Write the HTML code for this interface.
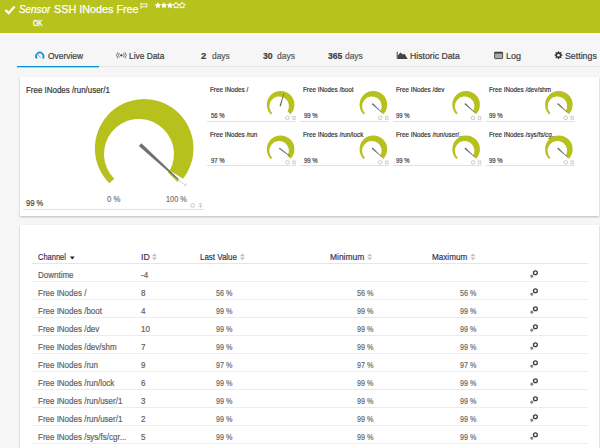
<!DOCTYPE html>
<html><head><meta charset="utf-8"><style>
html,body{margin:0;padding:0;}
body{width:600px;height:448px;overflow:hidden;position:relative;background:#f6f6f6;font-family:"Liberation Sans", sans-serif;}
.t{position:absolute;white-space:nowrap;font-family:"Liberation Sans", sans-serif;transform-origin:0 0;-webkit-text-stroke:0.2px currentColor;}
.panel{position:absolute;background:#fff;box-shadow:0 1px 2px rgba(0,0,0,0.25);}
svg{position:absolute;left:0;top:0;}
</style></head><body>
<div style="position:absolute;left:0px;top:0px;width:600px;height:33px;background:#b8c21c;"></div>
<div style="position:absolute;left:18px;top:66px;width:582px;height:1px;background:#e8e8e8;"></div>
<div style="position:absolute;left:17px;top:66px;width:82px;height:1px;background:#0a8fd6;"></div>
<div style="position:absolute;left:17px;top:67px;width:82px;height:1px;background:#a9d5ee;"></div>
<div class="panel" style="left:19.5px;top:77px;width:579px;height:139px"></div>
<div style="position:absolute;left:23px;top:209px;width:181px;height:1px;background:#e2e2e2;"></div>
<div style="position:absolute;left:207px;top:121px;width:89px;height:1px;background:#e2e2e2;"></div>
<div style="position:absolute;left:300px;top:121px;width:89px;height:1px;background:#e2e2e2;"></div>
<div style="position:absolute;left:393px;top:121px;width:89px;height:1px;background:#e2e2e2;"></div>
<div style="position:absolute;left:486px;top:121px;width:89px;height:1px;background:#e2e2e2;"></div>
<div style="position:absolute;left:207px;top:165px;width:89px;height:1px;background:#e2e2e2;"></div>
<div style="position:absolute;left:300px;top:165px;width:89px;height:1px;background:#e2e2e2;"></div>
<div style="position:absolute;left:393px;top:165px;width:89px;height:1px;background:#e2e2e2;"></div>
<div style="position:absolute;left:486px;top:165px;width:89px;height:1px;background:#e2e2e2;"></div>
<div class="panel" style="left:19.5px;top:225px;width:579px;height:240px"></div>
<div style="position:absolute;left:32px;top:263px;width:556px;height:1px;background:#e6e6e6;"></div>
<div style="position:absolute;left:32px;top:281px;width:556px;height:1px;background:#ececec;"></div>
<div style="position:absolute;left:32px;top:299px;width:556px;height:1px;background:#ececec;"></div>
<div style="position:absolute;left:32px;top:317px;width:556px;height:1px;background:#ececec;"></div>
<div style="position:absolute;left:32px;top:335px;width:556px;height:1px;background:#ececec;"></div>
<div style="position:absolute;left:32px;top:353px;width:556px;height:1px;background:#ececec;"></div>
<div style="position:absolute;left:32px;top:371px;width:556px;height:1px;background:#ececec;"></div>
<div style="position:absolute;left:32px;top:389px;width:556px;height:1px;background:#ececec;"></div>
<div style="position:absolute;left:32px;top:407px;width:556px;height:1px;background:#ececec;"></div>
<div style="position:absolute;left:32px;top:425px;width:556px;height:1px;background:#ececec;"></div>
<div style="position:absolute;left:32px;top:443px;width:556px;height:1px;background:#ececec;"></div>
<div class="t" style="left:19.06px;top:4px;font-size:10.5px;line-height:10.5px;color:#fff;font-weight:normal;font-style:italic;transform:scaleX(0.9390);-webkit-text-stroke:0.25px #fff">Sensor</div>
<div class="t" style="left:53.96px;top:4px;font-size:10.5px;line-height:10.5px;color:#fff;font-weight:normal;font-style:normal;transform:scaleX(1.0285);-webkit-text-stroke:0.25px #fff">SSH INodes Free</div>
<div class="t" style="left:32.80px;top:19px;font-size:8.5px;line-height:8.5px;color:#fff;font-weight:normal;font-style:normal;transform:scaleX(0.7667);-webkit-text-stroke:0.35px #fff">OK</div>
<div class="t" style="left:47.55px;top:52px;font-size:9px;line-height:9px;color:#3d3d3d;font-weight:normal;font-style:normal;transform:scaleX(0.9356);">Overview</div>
<div class="t" style="left:129.05px;top:52px;font-size:9px;line-height:9px;color:#3d3d3d;font-weight:normal;font-style:normal;transform:scaleX(0.9278);">Live Data</div>
<div class="t" style="left:200.85px;top:52px;font-size:9px;line-height:9px;color:#3d3d3d;font-weight:bold;font-style:normal;transform:scaleX(1.0442);">2</div>
<div class="t" style="left:211.53px;top:52px;font-size:9px;line-height:9px;color:#5a5a5a;font-weight:normal;font-style:normal;transform:scaleX(0.9359);">days</div>
<div class="t" style="left:263.49px;top:52px;font-size:9px;line-height:9px;color:#3d3d3d;font-weight:bold;font-style:normal;transform:scaleX(0.9647);">30</div>
<div class="t" style="left:276.58px;top:52px;font-size:9px;line-height:9px;color:#5a5a5a;font-weight:normal;font-style:normal;transform:scaleX(0.9439);">days</div>
<div class="t" style="left:327.73px;top:52px;font-size:9px;line-height:9px;color:#3d3d3d;font-weight:bold;font-style:normal;transform:scaleX(0.9538);">365</div>
<div class="t" style="left:344.83px;top:52px;font-size:9px;line-height:9px;color:#5a5a5a;font-weight:normal;font-style:normal;transform:scaleX(0.9306);">days</div>
<div class="t" style="left:410.13px;top:52px;font-size:9px;line-height:9px;color:#3d3d3d;font-weight:normal;font-style:normal;transform:scaleX(0.9676);">Historic Data</div>
<div class="t" style="left:506.11px;top:52px;font-size:9px;line-height:9px;color:#3d3d3d;font-weight:normal;font-style:normal;transform:scaleX(0.9928);">Log</div>
<div class="t" style="left:565.44px;top:52px;font-size:9px;line-height:9px;color:#3d3d3d;font-weight:normal;font-style:normal;transform:scaleX(0.9777);">Settings</div>
<div class="t" style="left:25.82px;top:86px;font-size:9px;line-height:9px;color:#333;font-weight:normal;font-style:normal;transform:scaleX(0.8821);">Free INodes /run/user/1</div>
<div class="t" style="left:25.50px;top:199px;font-size:9px;line-height:9px;color:#444;font-weight:normal;font-style:normal;transform:scaleX(0.8448);">99 %</div>
<div class="t" style="left:106.57px;top:195px;font-size:9px;line-height:9px;color:#777;font-weight:normal;font-style:normal;transform:scaleX(0.8612);">0 %</div>
<div class="t" style="left:166.19px;top:195px;font-size:9px;line-height:9px;color:#777;font-weight:normal;font-style:normal;transform:scaleX(0.8123);">100 %</div>
<div class="t" style="left:210.48px;top:86px;font-size:7.5px;line-height:7.5px;color:#333;font-weight:normal;font-style:normal;transform:scaleX(0.8412);">Free INodes /</div>
<div class="t" style="left:210.60px;top:112px;font-size:7.5px;line-height:7.5px;color:#444;font-weight:normal;font-style:normal;transform:scaleX(0.7994);">56 %</div>
<div class="t" style="left:303.23px;top:86px;font-size:7.5px;line-height:7.5px;color:#333;font-weight:normal;font-style:normal;transform:scaleX(0.8412);">Free INodes /boot</div>
<div class="t" style="left:303.54px;top:112px;font-size:7.5px;line-height:7.5px;color:#444;font-weight:normal;font-style:normal;transform:scaleX(0.7994);">99 %</div>
<div class="t" style="left:395.98px;top:86px;font-size:7.5px;line-height:7.5px;color:#333;font-weight:normal;font-style:normal;transform:scaleX(0.8412);">Free INodes /dev</div>
<div class="t" style="left:396.29px;top:112px;font-size:7.5px;line-height:7.5px;color:#444;font-weight:normal;font-style:normal;transform:scaleX(0.7994);">99 %</div>
<div class="t" style="left:488.73px;top:86px;font-size:7.5px;line-height:7.5px;color:#333;font-weight:normal;font-style:normal;transform:scaleX(0.8412);">Free INodes /dev/shm</div>
<div class="t" style="left:489.04px;top:112px;font-size:7.5px;line-height:7.5px;color:#444;font-weight:normal;font-style:normal;transform:scaleX(0.7994);">99 %</div>
<div class="t" style="left:210.48px;top:131px;font-size:7.5px;line-height:7.5px;color:#333;font-weight:normal;font-style:normal;transform:scaleX(0.8412);">Free INodes /run</div>
<div class="t" style="left:210.67px;top:157px;font-size:7.5px;line-height:7.5px;color:#444;font-weight:normal;font-style:normal;transform:scaleX(0.7994);">97 %</div>
<div class="t" style="left:303.23px;top:131px;font-size:7.5px;line-height:7.5px;color:#333;font-weight:normal;font-style:normal;transform:scaleX(0.8412);">Free INodes /run/lock</div>
<div class="t" style="left:303.54px;top:157px;font-size:7.5px;line-height:7.5px;color:#444;font-weight:normal;font-style:normal;transform:scaleX(0.7994);">99 %</div>
<div class="t" style="left:395.98px;top:131px;font-size:7.5px;line-height:7.5px;color:#333;font-weight:normal;font-style:normal;transform:scaleX(0.8412);">Free INodes /run/user/...</div>
<div class="t" style="left:396.29px;top:157px;font-size:7.5px;line-height:7.5px;color:#444;font-weight:normal;font-style:normal;transform:scaleX(0.7994);">99 %</div>
<div class="t" style="left:488.73px;top:131px;font-size:7.5px;line-height:7.5px;color:#333;font-weight:normal;font-style:normal;transform:scaleX(0.8412);">Free INodes /sys/fs/cg...</div>
<div class="t" style="left:489.04px;top:157px;font-size:7.5px;line-height:7.5px;color:#444;font-weight:normal;font-style:normal;transform:scaleX(0.7994);">99 %</div>
<div class="t" style="left:38.25px;top:252px;font-size:9.5px;line-height:9.5px;color:#36335a;font-weight:normal;font-style:normal;transform:scaleX(0.7871);">Channel</div>
<div class="t" style="left:140.88px;top:252px;font-size:9.5px;line-height:9.5px;color:#36335a;font-weight:normal;font-style:normal;transform:scaleX(0.9250);">ID</div>
<div class="t" style="left:199.96px;top:252px;font-size:9.5px;line-height:9.5px;color:#36335a;font-weight:normal;font-style:normal;transform:scaleX(0.8363);">Last Value</div>
<div class="t" style="left:330.01px;top:252px;font-size:9.5px;line-height:9.5px;color:#36335a;font-weight:normal;font-style:normal;transform:scaleX(0.8873);">Minimum</div>
<div class="t" style="left:432.14px;top:252px;font-size:9.5px;line-height:9.5px;color:#36335a;font-weight:normal;font-style:normal;transform:scaleX(0.8561);">Maximum</div>
<div class="t" style="left:37.56px;top:342px;font-size:9.5px;line-height:9.5px;color:#606060;font-weight:normal;font-style:normal;transform:scaleX(0.8406);">Free INodes /dev/shm</div>
<div class="t" style="left:215.63px;top:288px;font-size:9.5px;line-height:9.5px;color:#6a6a6a;font-weight:normal;font-style:normal;transform:scaleX(0.7590);">56 %</div>
<div class="t" style="left:37.56px;top:270px;font-size:9.5px;line-height:9.5px;color:#606060;font-weight:normal;font-style:normal;transform:scaleX(0.8406);">Downtime</div>
<div class="t" style="left:141.31px;top:270px;font-size:9.5px;line-height:9.5px;color:#606060;font-weight:normal;font-style:normal;transform:scaleX(0.8406);">-4</div>
<div class="t" style="left:37.56px;top:288px;font-size:9.5px;line-height:9.5px;color:#606060;font-weight:normal;font-style:normal;transform:scaleX(0.8406);">Free INodes /</div>
<div class="t" style="left:141.36px;top:288px;font-size:9.5px;line-height:9.5px;color:#606060;font-weight:normal;font-style:normal;transform:scaleX(0.8406);">8</div>
<div class="t" style="left:356.93px;top:288px;font-size:9.5px;line-height:9.5px;color:#6a6a6a;font-weight:normal;font-style:normal;transform:scaleX(0.7590);">56 %</div>
<div class="t" style="left:460.38px;top:288px;font-size:9.5px;line-height:9.5px;color:#6a6a6a;font-weight:normal;font-style:normal;transform:scaleX(0.7590);">56 %</div>
<div class="t" style="left:37.56px;top:306px;font-size:9.5px;line-height:9.5px;color:#606060;font-weight:normal;font-style:normal;transform:scaleX(0.8406);">Free INodes /boot</div>
<div class="t" style="left:141.43px;top:306px;font-size:9.5px;line-height:9.5px;color:#606060;font-weight:normal;font-style:normal;transform:scaleX(0.8406);">4</div>
<div class="t" style="left:215.64px;top:306px;font-size:9.5px;line-height:9.5px;color:#6a6a6a;font-weight:normal;font-style:normal;transform:scaleX(0.7590);">99 %</div>
<div class="t" style="left:356.94px;top:306px;font-size:9.5px;line-height:9.5px;color:#6a6a6a;font-weight:normal;font-style:normal;transform:scaleX(0.7590);">99 %</div>
<div class="t" style="left:460.39px;top:306px;font-size:9.5px;line-height:9.5px;color:#6a6a6a;font-weight:normal;font-style:normal;transform:scaleX(0.7590);">99 %</div>
<div class="t" style="left:37.56px;top:324px;font-size:9.5px;line-height:9.5px;color:#606060;font-weight:normal;font-style:normal;transform:scaleX(0.8406);">Free INodes /dev</div>
<div class="t" style="left:140.76px;top:324px;font-size:9.5px;line-height:9.5px;color:#606060;font-weight:normal;font-style:normal;transform:scaleX(0.8406);">10</div>
<div class="t" style="left:215.64px;top:324px;font-size:9.5px;line-height:9.5px;color:#6a6a6a;font-weight:normal;font-style:normal;transform:scaleX(0.7590);">99 %</div>
<div class="t" style="left:356.94px;top:324px;font-size:9.5px;line-height:9.5px;color:#6a6a6a;font-weight:normal;font-style:normal;transform:scaleX(0.7590);">99 %</div>
<div class="t" style="left:460.39px;top:324px;font-size:9.5px;line-height:9.5px;color:#6a6a6a;font-weight:normal;font-style:normal;transform:scaleX(0.7590);">99 %</div>
<div class="t" style="left:141.21px;top:342px;font-size:9.5px;line-height:9.5px;color:#606060;font-weight:normal;font-style:normal;transform:scaleX(0.8406);">7</div>
<div class="t" style="left:215.64px;top:342px;font-size:9.5px;line-height:9.5px;color:#6a6a6a;font-weight:normal;font-style:normal;transform:scaleX(0.7590);">99 %</div>
<div class="t" style="left:356.94px;top:342px;font-size:9.5px;line-height:9.5px;color:#6a6a6a;font-weight:normal;font-style:normal;transform:scaleX(0.7590);">99 %</div>
<div class="t" style="left:460.39px;top:342px;font-size:9.5px;line-height:9.5px;color:#6a6a6a;font-weight:normal;font-style:normal;transform:scaleX(0.7590);">99 %</div>
<div class="t" style="left:37.56px;top:360px;font-size:9.5px;line-height:9.5px;color:#606060;font-weight:normal;font-style:normal;transform:scaleX(0.8406);">Free INodes /run</div>
<div class="t" style="left:141.32px;top:360px;font-size:9.5px;line-height:9.5px;color:#606060;font-weight:normal;font-style:normal;transform:scaleX(0.8406);">9</div>
<div class="t" style="left:215.64px;top:360px;font-size:9.5px;line-height:9.5px;color:#6a6a6a;font-weight:normal;font-style:normal;transform:scaleX(0.7590);">97 %</div>
<div class="t" style="left:356.94px;top:360px;font-size:9.5px;line-height:9.5px;color:#6a6a6a;font-weight:normal;font-style:normal;transform:scaleX(0.7590);">97 %</div>
<div class="t" style="left:460.39px;top:360px;font-size:9.5px;line-height:9.5px;color:#6a6a6a;font-weight:normal;font-style:normal;transform:scaleX(0.7590);">97 %</div>
<div class="t" style="left:37.56px;top:378px;font-size:9.5px;line-height:9.5px;color:#606060;font-weight:normal;font-style:normal;transform:scaleX(0.8406);">Free INodes /run/lock</div>
<div class="t" style="left:141.33px;top:378px;font-size:9.5px;line-height:9.5px;color:#606060;font-weight:normal;font-style:normal;transform:scaleX(0.8406);">6</div>
<div class="t" style="left:215.64px;top:378px;font-size:9.5px;line-height:9.5px;color:#6a6a6a;font-weight:normal;font-style:normal;transform:scaleX(0.7590);">99 %</div>
<div class="t" style="left:356.94px;top:378px;font-size:9.5px;line-height:9.5px;color:#6a6a6a;font-weight:normal;font-style:normal;transform:scaleX(0.7590);">99 %</div>
<div class="t" style="left:460.39px;top:378px;font-size:9.5px;line-height:9.5px;color:#6a6a6a;font-weight:normal;font-style:normal;transform:scaleX(0.7590);">99 %</div>
<div class="t" style="left:37.56px;top:396px;font-size:9.5px;line-height:9.5px;color:#606060;font-weight:normal;font-style:normal;transform:scaleX(0.8406);">Free INodes /run/user/1</div>
<div class="t" style="left:141.28px;top:396px;font-size:9.5px;line-height:9.5px;color:#606060;font-weight:normal;font-style:normal;transform:scaleX(0.8406);">3</div>
<div class="t" style="left:215.64px;top:396px;font-size:9.5px;line-height:9.5px;color:#6a6a6a;font-weight:normal;font-style:normal;transform:scaleX(0.7590);">99 %</div>
<div class="t" style="left:356.94px;top:396px;font-size:9.5px;line-height:9.5px;color:#6a6a6a;font-weight:normal;font-style:normal;transform:scaleX(0.7590);">99 %</div>
<div class="t" style="left:460.39px;top:396px;font-size:9.5px;line-height:9.5px;color:#6a6a6a;font-weight:normal;font-style:normal;transform:scaleX(0.7590);">99 %</div>
<div class="t" style="left:37.56px;top:414px;font-size:9.5px;line-height:9.5px;color:#606060;font-weight:normal;font-style:normal;transform:scaleX(0.8406);">Free INodes /run/user/1</div>
<div class="t" style="left:141.28px;top:414px;font-size:9.5px;line-height:9.5px;color:#606060;font-weight:normal;font-style:normal;transform:scaleX(0.8406);">2</div>
<div class="t" style="left:215.64px;top:414px;font-size:9.5px;line-height:9.5px;color:#6a6a6a;font-weight:normal;font-style:normal;transform:scaleX(0.7590);">99 %</div>
<div class="t" style="left:356.94px;top:414px;font-size:9.5px;line-height:9.5px;color:#6a6a6a;font-weight:normal;font-style:normal;transform:scaleX(0.7590);">99 %</div>
<div class="t" style="left:460.39px;top:414px;font-size:9.5px;line-height:9.5px;color:#6a6a6a;font-weight:normal;font-style:normal;transform:scaleX(0.7590);">99 %</div>
<div class="t" style="left:37.56px;top:432px;font-size:9.5px;line-height:9.5px;color:#606060;font-weight:normal;font-style:normal;transform:scaleX(0.8406);">Free INodes /sys/fs/cgr...</div>
<div class="t" style="left:141.20px;top:432px;font-size:9.5px;line-height:9.5px;color:#606060;font-weight:normal;font-style:normal;transform:scaleX(0.8406);">5</div>
<div class="t" style="left:215.64px;top:432px;font-size:9.5px;line-height:9.5px;color:#6a6a6a;font-weight:normal;font-style:normal;transform:scaleX(0.7590);">99 %</div>
<div class="t" style="left:356.94px;top:432px;font-size:9.5px;line-height:9.5px;color:#6a6a6a;font-weight:normal;font-style:normal;transform:scaleX(0.7590);">99 %</div>
<div class="t" style="left:460.39px;top:432px;font-size:9.5px;line-height:9.5px;color:#6a6a6a;font-weight:normal;font-style:normal;transform:scaleX(0.7590);">99 %</div>
<svg width="600" height="448" viewBox="0 0 600 448"><path d="M5.4,10 L8.7,13.2 L14.6,6.6" fill="none" stroke="#fff" stroke-width="2.3"/><path d="M141,2.9 V8.7" stroke="#fff" stroke-width="1" fill="none"/><path d="M141.5,3.6 Q144.2,4.8 146.9,3.6 V7.2 Q144.2,6.0 141.5,7.2" fill="none" stroke="#fff" stroke-width="0.9"/><polygon points="157.90,2.20 158.93,3.98 160.94,4.41 159.57,5.94 159.78,7.99 157.90,7.16 156.02,7.99 156.23,5.94 154.86,4.41 156.87,3.98" fill="#fff"/><polygon points="163.95,2.20 164.98,3.98 166.99,4.41 165.62,5.94 165.83,7.99 163.95,7.16 162.07,7.99 162.28,5.94 160.91,4.41 162.92,3.98" fill="#fff"/><polygon points="170.00,2.20 171.03,3.98 173.04,4.41 171.67,5.94 171.88,7.99 170.00,7.16 168.12,7.99 168.33,5.94 166.96,4.41 168.97,3.98" fill="#fff"/><polygon points="176.05,2.20 177.08,3.98 179.09,4.41 177.72,5.94 177.93,7.99 176.05,7.16 174.17,7.99 174.38,5.94 173.01,4.41 175.02,3.98" fill="none" stroke="#fff" stroke-width="1.0" stroke-linejoin="round"/><polygon points="182.10,2.20 183.13,3.98 185.14,4.41 183.77,5.94 183.98,7.99 182.10,7.16 180.22,7.99 180.43,5.94 179.06,4.41 181.07,3.98" fill="none" stroke="#fff" stroke-width="1.0" stroke-linejoin="round"/><path d="M36.77,58.42 A3.7,3.7 0 1 1 42.83,58.42" fill="none" stroke="#1592d4" stroke-width="1.7"/><line x1="38.1" y1="55.1" x2="40.75" y2="57.55" stroke="#4aaee0" stroke-width="0.9"/><circle cx="121.4" cy="55.3" r="1.15" fill="#333"/><path d="M119.5,53.2 A3,3 0 0 0 119.5,57.4 M123.3,53.2 A3,3 0 0 1 123.3,57.4" fill="none" stroke="#666" stroke-width="0.9"/><path d="M117.9,52.2 A4.6,4.6 0 0 0 117.9,58.4 M124.9,52.2 A4.6,4.6 0 0 1 124.9,58.4" fill="none" stroke="#666" stroke-width="0.9"/><path d="M397.2,51.8 V59" stroke="#444" stroke-width="1" fill="none"/><path d="M397.8,59 V55.5 L400.4,52.6 L402.8,54.6 L404.6,53.8 L407.6,59 Z" fill="#444"/><rect x="494.6" y="52.2" width="8" height="6.4" rx="0.6" fill="#aaa" stroke="#444" stroke-width="0.9"/><rect x="494.6" y="52.2" width="8" height="1.3" fill="#333"/><polygon fill="#3a3a3a" points="562.48,54.81 562.48,55.59 561.37,56.07 561.15,56.62 561.59,57.74 561.04,58.29 559.91,57.85 559.37,58.07 558.89,59.18 558.11,59.18 557.63,58.07 557.08,57.85 555.96,58.29 555.41,57.74 555.85,56.61 555.63,56.07 554.52,55.59 554.52,54.81 555.63,54.33 555.85,53.78 555.41,52.66 555.96,52.11 557.09,52.55 557.63,52.33 558.11,51.22 558.89,51.22 559.37,52.33 559.92,52.55 561.04,52.11 561.59,52.66 561.15,53.79 561.37,54.33"/><circle cx="558.5" cy="55.2" r="1.3" fill="#f6f6f6"/><path d="M109.34,183.26 A49.30,49.30 0 1 1 183.05,178.75 L169.76,170.62 A35.00,35.00 0 1 0 114.31,178.81 Z" fill="#b7c11d"/><polygon points="168.0,172.6 169.0,171.5 178.6,181.0 177.6,182.0" fill="#b7c11d"/><polygon fill="#707070" points="138.85,146.10 178.16,180.18 179.03,179.21 141.41,143.29"/><line x1="178.59" y1="179.70" x2="183.40" y2="184.07" stroke="#b8b8b8" stroke-width="0.7"/><path d="M184,183.6 L186.4,186 M186.4,183.6 L184,186" stroke="#c8c8c8" stroke-width="0.8"/><circle cx="192.70" cy="205.50" r="1.9" fill="none" stroke="#c8c8c8" stroke-width="1"/><path d="M198.70,203.80 H202.30 M200.50,203.80 V208.10 M198.60,206.40 H202.40" stroke="#c8c8c8" stroke-width="0.9" fill="none"/><path d="M270.84,114.46 A13.80,13.80 0 1 1 290.53,114.29 L287.50,111.36 A9.80,9.80 0 1 0 272.23,113.21 Z" fill="#b7c11d"/><polygon fill="#6a6a6a" points="280.83,106.43 284.18,93.45 283.60,93.28 279.48,106.04"/><line x1="283.89" y1="93.37" x2="284.51" y2="91.26" stroke="#c0c0c0" stroke-width="0.7"/><circle cx="287.50" cy="117.90" r="1.8" fill="none" stroke="#c8c8c8" stroke-width="1"/><path d="M292.20,116.50 H295.80 M292.90,116.50 V119.30 M295.10,116.50 V119.30 M292.20,119.30 H295.80" stroke="#c8c8c8" stroke-width="0.8" fill="none"/><path d="M363.59,114.46 A13.80,13.80 0 1 1 383.28,114.29 L380.25,111.36 A9.80,9.80 0 1 0 364.98,113.21 Z" fill="#b7c11d"/><polygon fill="#6a6a6a" points="371.70,104.14 381.88,112.86 382.28,112.42 372.64,103.11"/><line x1="382.08" y1="112.64" x2="383.70" y2="114.12" stroke="#c0c0c0" stroke-width="0.7"/><circle cx="380.25" cy="117.90" r="1.8" fill="none" stroke="#c8c8c8" stroke-width="1"/><path d="M384.95,116.50 H388.55 M385.65,116.50 V119.30 M387.85,116.50 V119.30 M384.95,119.30 H388.55" stroke="#c8c8c8" stroke-width="0.8" fill="none"/><path d="M456.34,114.46 A13.80,13.80 0 1 1 476.03,114.29 L473.00,111.36 A9.80,9.80 0 1 0 457.73,113.21 Z" fill="#b7c11d"/><polygon fill="#6a6a6a" points="464.45,104.14 474.63,112.86 475.03,112.42 465.39,103.11"/><line x1="474.83" y1="112.64" x2="476.45" y2="114.12" stroke="#c0c0c0" stroke-width="0.7"/><circle cx="473.00" cy="117.90" r="1.8" fill="none" stroke="#c8c8c8" stroke-width="1"/><path d="M477.70,116.50 H481.30 M478.40,116.50 V119.30 M480.60,116.50 V119.30 M477.70,119.30 H481.30" stroke="#c8c8c8" stroke-width="0.8" fill="none"/><path d="M549.09,114.46 A13.80,13.80 0 1 1 568.78,114.29 L565.75,111.36 A9.80,9.80 0 1 0 550.48,113.21 Z" fill="#b7c11d"/><polygon fill="#6a6a6a" points="557.20,104.14 567.38,112.86 567.78,112.42 558.14,103.11"/><line x1="567.58" y1="112.64" x2="569.20" y2="114.12" stroke="#c0c0c0" stroke-width="0.7"/><circle cx="565.75" cy="117.90" r="1.8" fill="none" stroke="#c8c8c8" stroke-width="1"/><path d="M570.45,116.50 H574.05 M571.15,116.50 V119.30 M573.35,116.50 V119.30 M570.45,119.30 H574.05" stroke="#c8c8c8" stroke-width="0.8" fill="none"/><path d="M270.84,158.96 A13.80,13.80 0 1 1 290.53,158.79 L287.50,155.86 A9.80,9.80 0 1 0 272.23,157.71 Z" fill="#b7c11d"/><polygon fill="#6a6a6a" points="278.90,148.80 289.86,156.52 290.22,156.05 279.74,147.68"/><line x1="290.04" y1="156.28" x2="291.80" y2="157.61" stroke="#c0c0c0" stroke-width="0.7"/><circle cx="287.50" cy="162.40" r="1.8" fill="none" stroke="#c8c8c8" stroke-width="1"/><path d="M292.20,161.00 H295.80 M292.90,161.00 V163.80 M295.10,161.00 V163.80 M292.20,163.80 H295.80" stroke="#c8c8c8" stroke-width="0.8" fill="none"/><path d="M363.59,158.96 A13.80,13.80 0 1 1 383.28,158.79 L380.25,155.86 A9.80,9.80 0 1 0 364.98,157.71 Z" fill="#b7c11d"/><polygon fill="#6a6a6a" points="371.70,148.64 381.88,157.36 382.28,156.92 372.64,147.61"/><line x1="382.08" y1="157.14" x2="383.70" y2="158.62" stroke="#c0c0c0" stroke-width="0.7"/><circle cx="380.25" cy="162.40" r="1.8" fill="none" stroke="#c8c8c8" stroke-width="1"/><path d="M384.95,161.00 H388.55 M385.65,161.00 V163.80 M387.85,161.00 V163.80 M384.95,163.80 H388.55" stroke="#c8c8c8" stroke-width="0.8" fill="none"/><path d="M456.34,158.96 A13.80,13.80 0 1 1 476.03,158.79 L473.00,155.86 A9.80,9.80 0 1 0 457.73,157.71 Z" fill="#b7c11d"/><polygon fill="#6a6a6a" points="464.45,148.64 474.63,157.36 475.03,156.92 465.39,147.61"/><line x1="474.83" y1="157.14" x2="476.45" y2="158.62" stroke="#c0c0c0" stroke-width="0.7"/><circle cx="473.00" cy="162.40" r="1.8" fill="none" stroke="#c8c8c8" stroke-width="1"/><path d="M477.70,161.00 H481.30 M478.40,161.00 V163.80 M480.60,161.00 V163.80 M477.70,163.80 H481.30" stroke="#c8c8c8" stroke-width="0.8" fill="none"/><path d="M549.09,158.96 A13.80,13.80 0 1 1 568.78,158.79 L565.75,155.86 A9.80,9.80 0 1 0 550.48,157.71 Z" fill="#b7c11d"/><polygon fill="#6a6a6a" points="557.20,148.64 567.38,157.36 567.78,156.92 558.14,147.61"/><line x1="567.58" y1="157.14" x2="569.20" y2="158.62" stroke="#c0c0c0" stroke-width="0.7"/><circle cx="565.75" cy="162.40" r="1.8" fill="none" stroke="#c8c8c8" stroke-width="1"/><path d="M570.45,161.00 H574.05 M571.15,161.00 V163.80 M573.35,161.00 V163.80 M570.45,163.80 H574.05" stroke="#c8c8c8" stroke-width="0.8" fill="none"/><polygon points="69.9,256.4 74.7,256.4 72.3,259.5" fill="#222"/><polygon points="151.90,256.2 156.90,256.2 154.40,253.4" fill="#c0c0c0"/><polygon points="151.90,257.4 156.90,257.4 154.40,260.2" fill="#c0c0c0"/><polygon points="239.90,256.2 244.90,256.2 242.40,253.4" fill="#c0c0c0"/><polygon points="239.90,257.4 244.90,257.4 242.40,260.2" fill="#c0c0c0"/><polygon points="367.20,256.2 372.20,256.2 369.70,253.4" fill="#c0c0c0"/><polygon points="367.20,257.4 372.20,257.4 369.70,260.2" fill="#c0c0c0"/><polygon points="470.50,256.2 475.50,256.2 473.00,253.4" fill="#c0c0c0"/><polygon points="470.50,257.4 475.50,257.4 473.00,260.2" fill="#c0c0c0"/><circle cx="535.4" cy="272.70" r="1.9" fill="none" stroke="#3a3a3a" stroke-width="1.3"/><circle cx="531.8" cy="276.20" r="1.15" fill="#999" stroke="#666" stroke-width="0.8"/><circle cx="535.4" cy="290.70" r="1.9" fill="none" stroke="#3a3a3a" stroke-width="1.3"/><circle cx="531.8" cy="294.20" r="1.15" fill="#999" stroke="#666" stroke-width="0.8"/><circle cx="535.4" cy="308.70" r="1.9" fill="none" stroke="#3a3a3a" stroke-width="1.3"/><circle cx="531.8" cy="312.20" r="1.15" fill="#999" stroke="#666" stroke-width="0.8"/><circle cx="535.4" cy="326.70" r="1.9" fill="none" stroke="#3a3a3a" stroke-width="1.3"/><circle cx="531.8" cy="330.20" r="1.15" fill="#999" stroke="#666" stroke-width="0.8"/><circle cx="535.4" cy="344.70" r="1.9" fill="none" stroke="#3a3a3a" stroke-width="1.3"/><circle cx="531.8" cy="348.20" r="1.15" fill="#999" stroke="#666" stroke-width="0.8"/><circle cx="535.4" cy="362.70" r="1.9" fill="none" stroke="#3a3a3a" stroke-width="1.3"/><circle cx="531.8" cy="366.20" r="1.15" fill="#999" stroke="#666" stroke-width="0.8"/><circle cx="535.4" cy="380.70" r="1.9" fill="none" stroke="#3a3a3a" stroke-width="1.3"/><circle cx="531.8" cy="384.20" r="1.15" fill="#999" stroke="#666" stroke-width="0.8"/><circle cx="535.4" cy="398.70" r="1.9" fill="none" stroke="#3a3a3a" stroke-width="1.3"/><circle cx="531.8" cy="402.20" r="1.15" fill="#999" stroke="#666" stroke-width="0.8"/><circle cx="535.4" cy="416.70" r="1.9" fill="none" stroke="#3a3a3a" stroke-width="1.3"/><circle cx="531.8" cy="420.20" r="1.15" fill="#999" stroke="#666" stroke-width="0.8"/><circle cx="535.4" cy="434.70" r="1.9" fill="none" stroke="#3a3a3a" stroke-width="1.3"/><circle cx="531.8" cy="438.20" r="1.15" fill="#999" stroke="#666" stroke-width="0.8"/></svg>
</body></html>
